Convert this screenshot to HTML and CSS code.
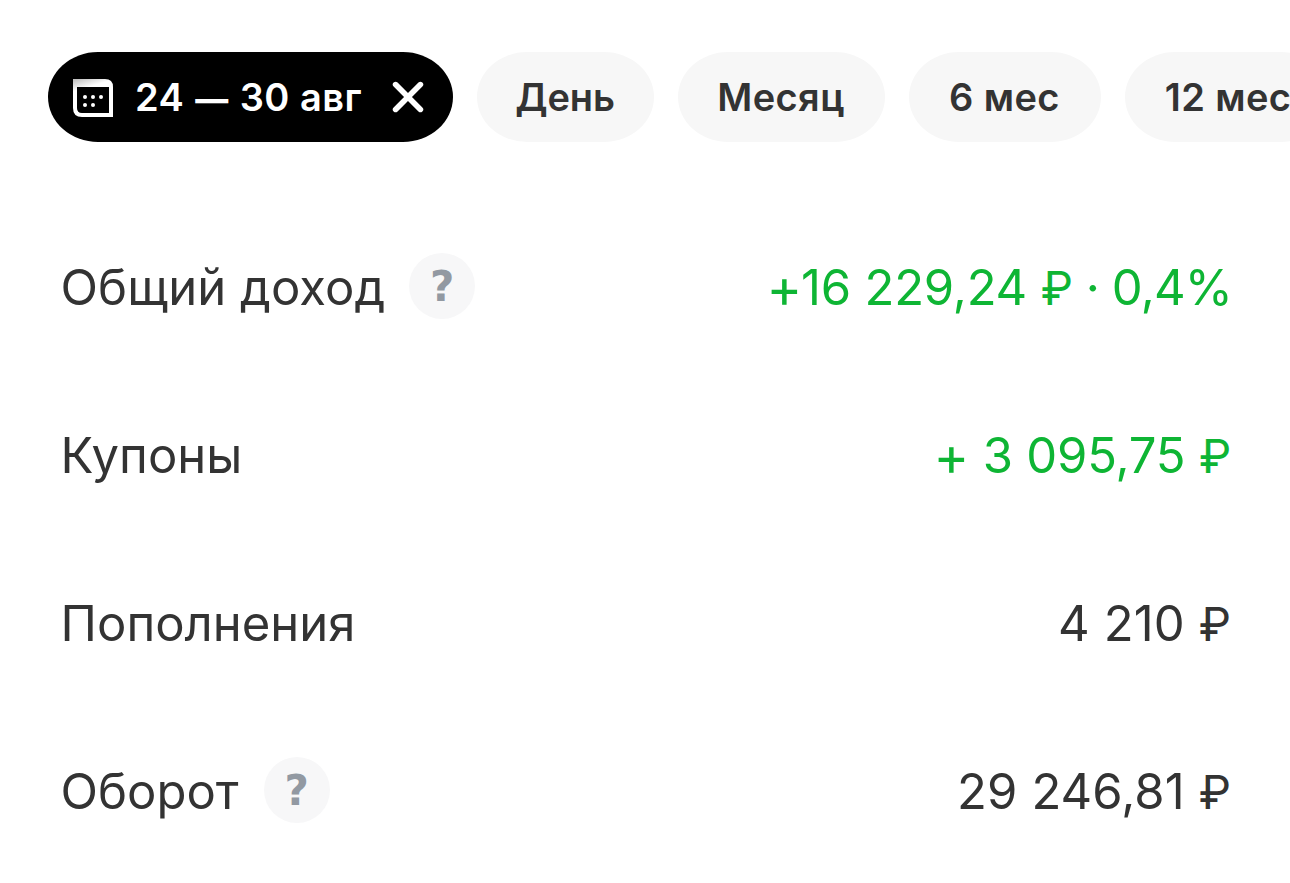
FILE: index.html
```html
<!DOCTYPE html>
<html lang="ru">
<head>
<meta charset="utf-8">
<title>Доход</title>
<link rel="stylesheet" href="styles.css">
</head>
<body>
<nav class="filters">
  <button class="chip chip-active">
    <svg class="calendar" viewBox="0 0 40 38"><defs><linearGradient id="shade" gradientUnits="userSpaceOnUse" x1="6" y1="0" x2="9" y2="10"><stop offset="0" stop-color="#c4c4c4"/><stop offset="1" stop-color="#fff"/></linearGradient></defs><path fill="url(#shade)" fill-rule="evenodd" d="M0 0H32Q40 0 40 8V38H9Q0 38 0 29ZM4 8V29Q4 34 9 34H36V8Z"/><g fill="#fff"><circle cx="12" cy="18" r="2"/><circle cx="20" cy="18" r="2"/><circle cx="28" cy="18" r="2"/><circle cx="12" cy="26" r="2"/><circle cx="20" cy="26" r="2"/></g></svg>
    <span class="range">24 <span class="dash">—</span> 30 авг</span>
    <svg class="close" viewBox="0 0 32 32"><path d="M3.6 3.6L28.4 28.4M28.4 3.6L3.6 28.4" stroke="#fff" stroke-width="5.6" stroke-linecap="round"/></svg>
  </button>
  <button class="chip chip-day">День</button>
  <button class="chip chip-month">Месяц</button>
  <button class="chip chip-half">6 мес</button>
  <button class="chip chip-year">12 мес</button>
</nav>
<main class="rows">
  <div class="row"><span class="label label-total">Общий доход</span><span class="help">?</span><span class="value green value-total"><span class="plus">+</span>16 229,24 <span class="ruble">₽</span><span class="percent"> · 0,4%</span></span></div>
  <div class="row"><span class="label">Купоны</span><span class="value green value-coupons"><span class="plus">+</span> 3 095,75 <span class="ruble">₽</span></span></div>
  <div class="row"><span class="label">Пополнения</span><span class="value">4 210 <span class="ruble">₽</span></span></div>
  <div class="row"><span class="label">Оборот</span><span class="help">?</span><span class="value">29 246,81 <span class="ruble">₽</span></span></div>
</main>
</body>
</html>
```
FILE: styles.css
```css
*{box-sizing:border-box}
body{margin:0;background:#fff;color:#333;font-family:Inter,sans-serif;overflow:hidden}
.filters{display:flex;gap:24px;padding:52px 0 0 48px;height:142px}
.chip{flex:none;height:90px;border:0;border-radius:50px/45px;background:#f7f7f7;color:#333;font:600 38px/90px Inter,sans-serif;letter-spacing:.4px;padding:0;display:flex;align-items:center;justify-content:center;white-space:nowrap}
.chip-active{width:405px;background:#000;color:#fff;justify-content:flex-start;padding-left:25px}
.calendar{width:40px;height:38px;margin:2px 22px 0 0}
.range{width:226px;height:90px;letter-spacing:.5px}
.dash{display:inline-block;margin:0 .8px;font-size:33px;font-weight:800;line-height:1;vertical-align:0}
.close{width:32px;height:32px;margin-left:31px}
.chip-day{width:177px;letter-spacing:-.1px;padding-right:1px}
.chip-month{width:207px;padding-right:1px}
.chip-half{width:192px;padding-right:1px}
.chip-year{width:206px}
.rows{padding:62px 58px 0 60.6px}
.row{height:168px;display:flex;align-items:center}
.label,.value{font-size:49px;line-height:60px;white-space:nowrap}
.label-total{letter-spacing:.05px;margin-right:-1px}
.value{margin-left:auto;margin-right:1px;letter-spacing:.1px}
.value-total{letter-spacing:-.2px;margin-right:0}
.value-coupons{letter-spacing:-.2px}
.percent{letter-spacing:-.85px}
.plus{display:inline-block;font-size:54px;line-height:1;vertical-align:-2px}
.value-total .plus{margin-right:-1px}
.ruble{font-size:46px;line-height:1}
.green{color:#0eb534}
.help{width:66px;height:66px;margin:0 0 4px 25px;border-radius:50%;background:#f7f7f8;color:#9299a2;font:700 42px/68px "DejaVu Sans",sans-serif;text-align:center}
```
